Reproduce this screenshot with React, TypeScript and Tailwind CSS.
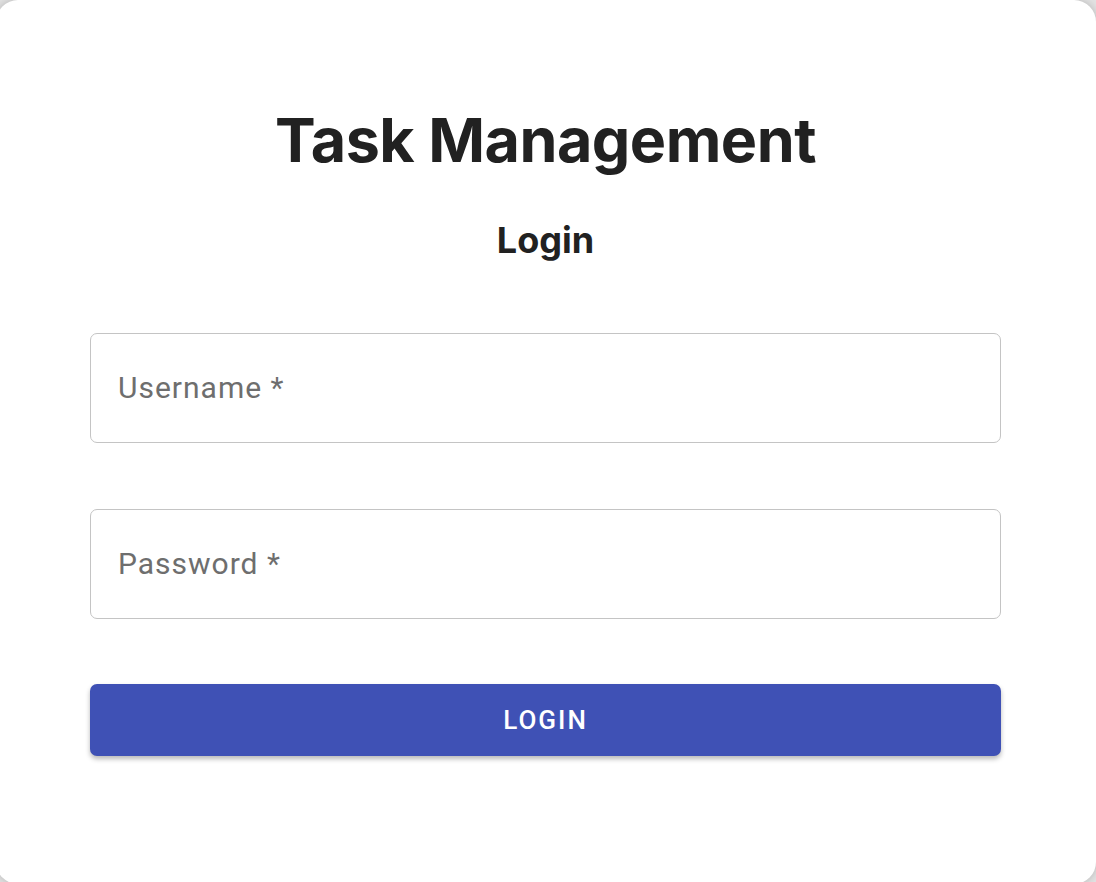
import React from "react";

const Field = ({ label, type }: { label: string; type: string }) => {
  return (
    <div className="h-[110px] w-full rounded-[7px] border border-[#c4c4c4] bg-white flex items-center px-[27px]">
      <input
        type={type}
        placeholder={label}
        className="w-full -mt-[2px] bg-transparent outline-none text-[30px] tracking-[1px] text-[#212121] placeholder:text-[#6e6e6e] font-['Roboto',sans-serif]"
      />
    </div>
  );
};

const App = () => {
  return (
    <div className="w-[1096px] h-[882px] overflow-hidden bg-[#e2e2e2]">
      <div className="h-[884px] w-[1100px] -ml-[4px] bg-white rounded-[22px] shadow-[0_0_8px_rgba(0,0,0,0.2)] pl-[94px] pr-[95px] pt-[100px]">
        <h1 className="text-center text-[61px] leading-[80px] font-bold text-[#212121] tracking-[-0.5px] font-['Inter',sans-serif]">
          Task Management
        </h1>
        <h2 className="mt-[40px] text-center text-[36px] leading-[40px] font-bold text-[#212121] font-['Inter',sans-serif]">
          Login
        </h2>

        <form className="mt-[73px] flex flex-col" onSubmit={(e) => e.preventDefault()}>
          <Field label="Username *" type="text" />
          <div className="mt-[66px]">
            <Field label="Password *" type="password" />
          </div>
          <button
            type="submit"
            className="mt-[65px] h-[72px] w-full rounded-[7px] bg-[#3f51b5] text-white text-[26px] font-medium tracking-[2px] uppercase font-['Roboto',sans-serif] shadow-[0_3px_5px_rgba(0,0,0,0.28)]"
          >
            Login
          </button>
        </form>
      </div>
    </div>
  );
};

export default App;
